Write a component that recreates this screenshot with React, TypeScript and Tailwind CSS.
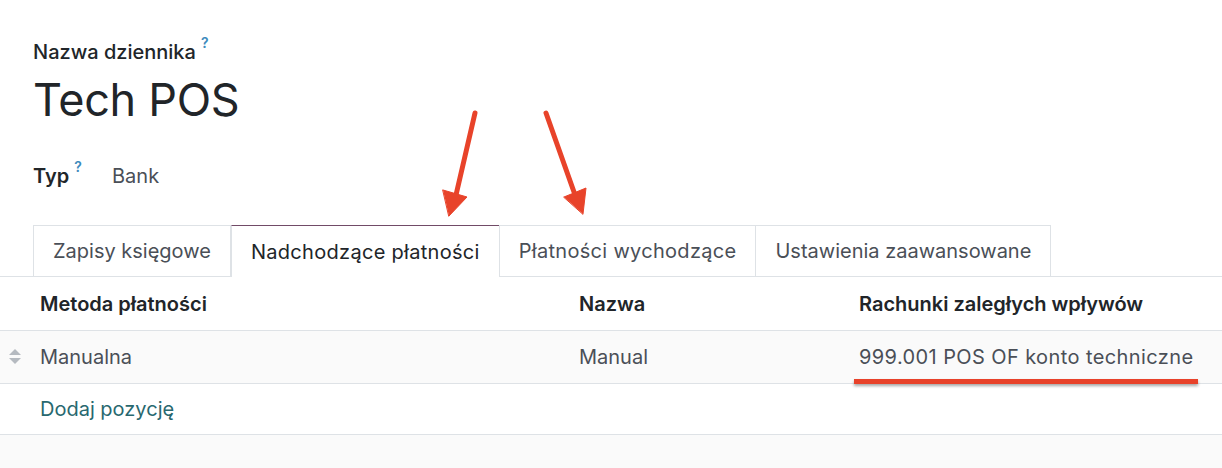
const tabs = [
  { label: 'Zapisy księgowe', active: false, track: '' },
  { label: 'Nadchodzące płatności', active: true, track: 'tracking-[0.3px]' },
  { label: 'Płatności wychodzące', active: false, track: 'tracking-[0.3px]' },
  { label: 'Ustawienia zaawansowane', active: false, track: '' },
];

function Help() {
  return <span className="ml-[5px] text-[14px] leading-none font-semibold text-[#3d8bbd] relative -top-[3px]">?</span>;
}

function Handle() {
  return (
    <svg width="12" height="16" viewBox="0 0 12 16" className="text-[#b5bac0]">
      <path d="M6 0 L12 6 L0 6 Z" fill="currentColor" />
      <path d="M0 9 L12 9 L6 15 Z" fill="currentColor" />
    </svg>
  );
}

function Annotations() {
  return (
    <svg className="absolute inset-0 pointer-events-none" width="1222" height="468" viewBox="0 0 1222 468">
      <defs>
        <filter id="sh" x="-10%" y="-100%" width="120%" height="400%">
          <feDropShadow dx="0" dy="2" stdDeviation="1.5" floodColor="#000" floodOpacity="0.35" />
        </filter>
      </defs>
      <g fill="#e8432a" stroke="#e8432a" strokeLinecap="round">
        <line x1="475" y1="113" x2="456" y2="195" strokeWidth="5" />
        <path d="M443 190 L467 197 L449 216 Z" strokeWidth="1" strokeLinejoin="round" />
        <line x1="546" y1="113" x2="574" y2="192" strokeWidth="5" />
        <path d="M564 197 L586 188 L583 214 Z" strokeWidth="1" strokeLinejoin="round" />
      </g>
      <rect x="854" y="379" width="344" height="5" fill="#e8432a" filter="url(#sh)" />
    </svg>
  );
}

export default function App() {
  return (
    <div className="relative w-[1222px] h-[468px] overflow-hidden bg-[#fafafa] font-['Inter',sans-serif] text-[#212529] text-[20px]">
      <div className="bg-white pt-[39px]">
        <div className="px-[33px]">
          <div className="flex items-start text-[20px] font-medium leading-[26px] text-[#212529]">
            Nazwa dziennika<Help />
          </div>
          <div className="mt-[8px] text-[45px] leading-[54px] font-normal text-[#212529] tracking-[-0.3px]">Tech POS</div>
          <div className="mt-[36px] flex items-start h-[26px]">
            <div className="w-[79px] flex items-start font-semibold leading-[26px]">
              Typ<Help />
            </div>
            <div className="leading-[26px] text-[#4a4f57]">Bank</div>
          </div>
        </div>

        <div className="mt-[36px] border-b border-[#dee2e6] pl-[33px] flex">
          {tabs.map((t) =>
            t.active ? (
              <div
                key={t.label}
                className={`-mb-px h-[52px] px-[19px] flex items-center bg-white border-x border-[#dee2e6] border-t border-t-[#714b67] text-[#212529] ${t.track}`}
              >
                {t.label}
              </div>
            ) : (
              <div
                key={t.label}
                className={`-ml-px first:ml-0 h-[51px] px-[19px] flex items-center border border-b-0 border-[#dee2e6] text-[#4a4f57] ${t.track}`}
              >
                {t.label}
              </div>
            )
          )}
        </div>
      </div>

      <div className="bg-white">
        <div className="grid grid-cols-[579px_280px_1fr] h-[54px] items-center border-b border-[#dee2e6] font-semibold text-[#212529]">
          <div className="pl-[40px]">Metoda płatności</div>
          <div>Nazwa</div>
          <div>Rachunki zaległych wpływów</div>
        </div>
        <div className="grid grid-cols-[579px_280px_1fr] h-[53px] items-center border-b border-[#dee2e6] bg-[#fafafa] text-[#4a4f57]">
          <div className="flex items-center">
            <div className="w-[40px] pl-[9px] flex items-center"><Handle /></div>
            Manualna
          </div>
          <div>Manual</div>
          <div className="tracking-[0.4px]">999.001 POS OF konto techniczne</div>
        </div>
        <div className="h-[51px] flex items-center border-b border-[#dee2e6] pl-[40px] text-[#28686f]">
          Dodaj pozycję
        </div>
      </div>

      <Annotations />
    </div>
  );
}
